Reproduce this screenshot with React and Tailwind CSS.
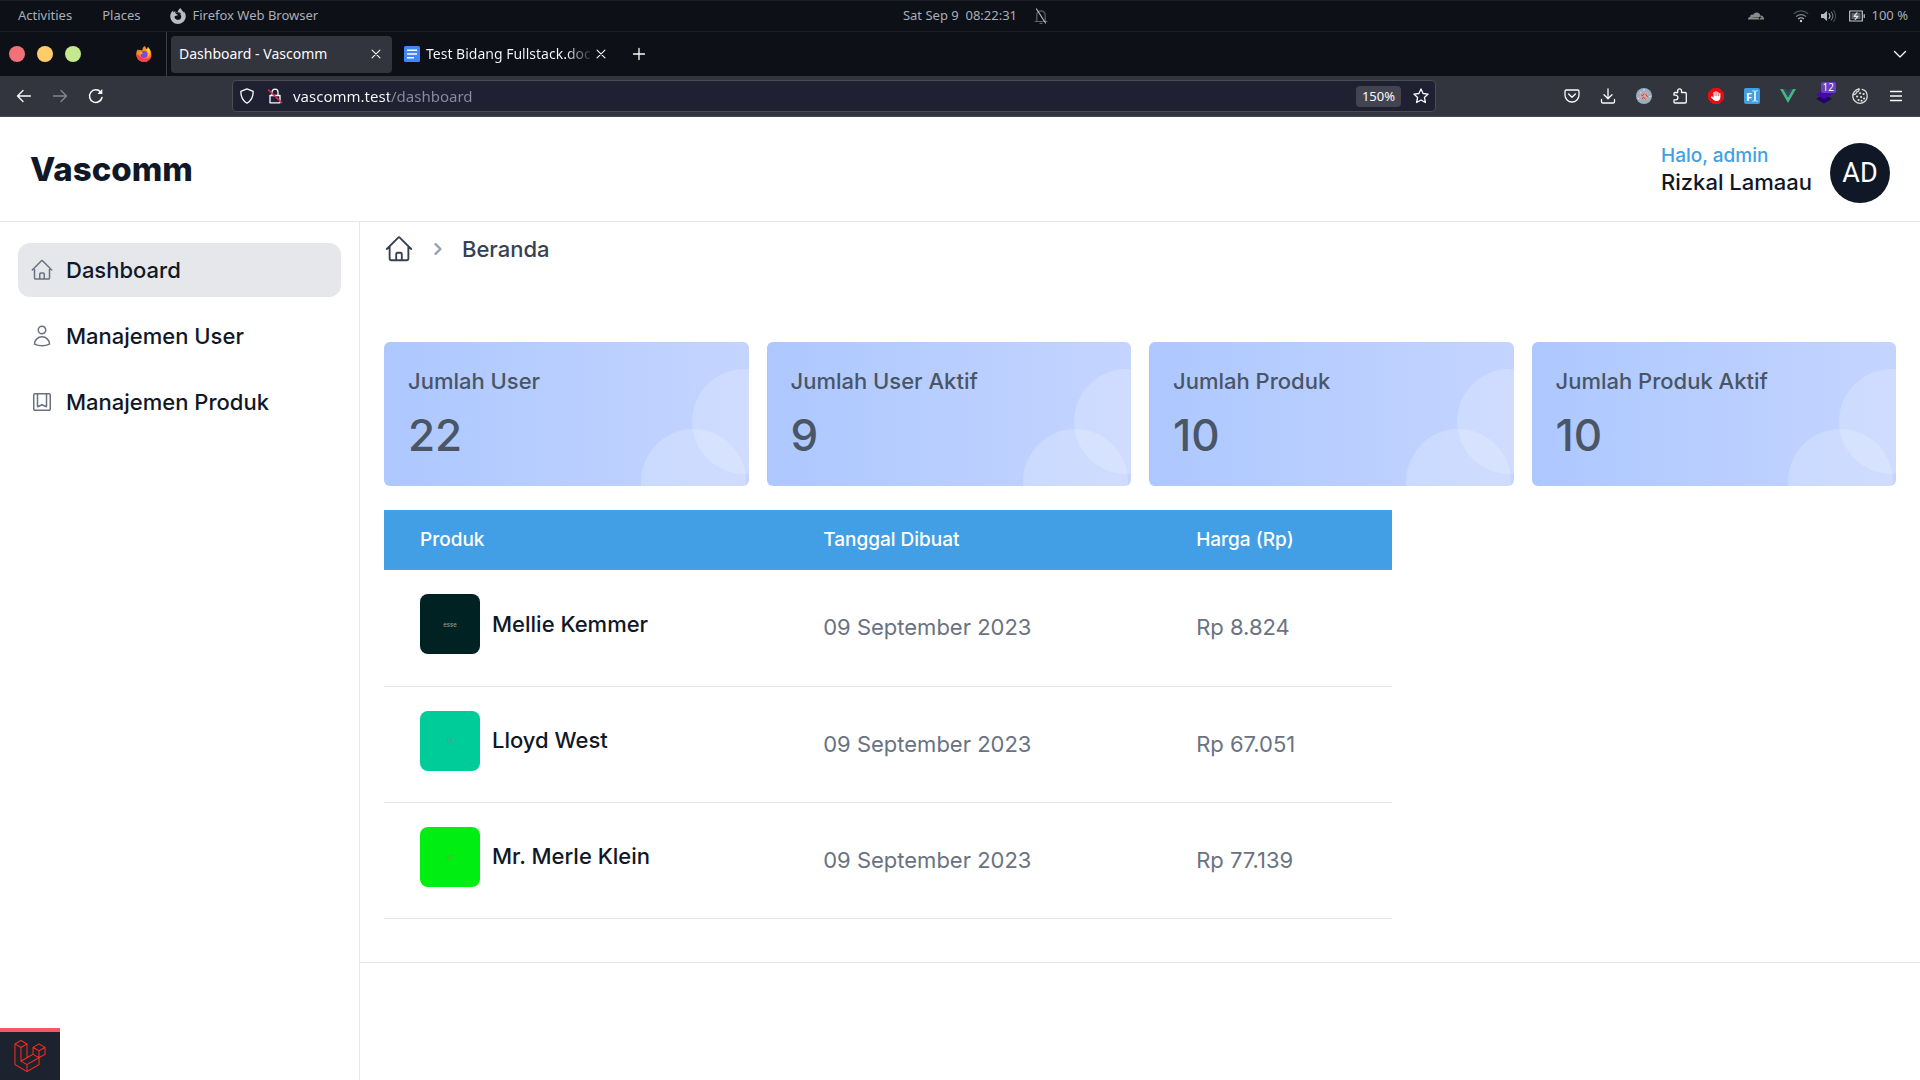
import React from "react";
import { SiCloudflare, SiFirefoxbrowser, SiLaravel } from "react-icons/si";
import { FaHand } from "react-icons/fa6";

const navItems = [
  { label: "Dashboard", icon: "home", active: true },
  { label: "Manajemen User", icon: "user", active: false },
  { label: "Manajemen Produk", icon: "book", active: false },
];

const stats = [
  { label: "Jumlah User", value: "22" },
  { label: "Jumlah User Aktif", value: "9" },
  { label: "Jumlah Produk", value: "10" },
  { label: "Jumlah Produk Aktif", value: "10" },
];

const products = [
  { name: "Mellie Kemmer", date: "09 September 2023", price: "Rp 8.824", thumb: "bg-[#002222]", word: "esse", wordColor: "text-[#8c9b9b]" },
  { name: "Lloyd West", date: "09 September 2023", price: "Rp 67.051", thumb: "bg-[#00cc99]", word: "ut", wordColor: "text-[#4aa58c]" },
  { name: "Mr. Merle Klein", date: "09 September 2023", price: "Rp 77.139", thumb: "bg-[#00ee11]", word: "ut", wordColor: "text-[#4ab552]" },
];

const iconPaths = {
  home: ["m2.25 12 8.954-8.955c.44-.439 1.152-.439 1.591 0L21.75 12M4.5 9.75v10.125c0 .621.504 1.125 1.125 1.125H9.75v-4.875c0-.621.504-1.125 1.125-1.125h2.25c.621 0 1.125.504 1.125 1.125V21h4.125c.621 0 1.125-.504 1.125-1.125V9.75M8.25 21h8.25"],
  user: ["M15.75 6a3.75 3.75 0 1 1-7.5 0 3.75 3.75 0 0 1 7.5 0Z", "M4.501 20.118a7.5 7.5 0 0 1 14.998 0A17.933 17.933 0 0 1 12 21.75c-2.676 0-5.216-.584-7.499-1.632Z"],
  book: ["M5 3.75h14A1.25 1.25 0 0 1 20.25 5v14A1.25 1.25 0 0 1 19 20.25H5A1.25 1.25 0 0 1 3.75 19V5A1.25 1.25 0 0 1 5 3.75Z", "M7.5 3.75v13l4.5-2 4.5 2v-13"],
};

function OutlineIcon({ name, className }) {
  return (
    <svg viewBox="0 0 24 24" fill="none" stroke="currentColor" strokeWidth="1.5" strokeLinecap="round" strokeLinejoin="round" className={className} aria-hidden="true">
      {iconPaths[name].map((d) => (
        <path key={d} d={d} />
      ))}
    </svg>
  );
}

function Glyph({ children, className = "size-4", width = 1.3 }) {
  return (
    <svg viewBox="0 0 16 16" fill="none" stroke="currentColor" strokeWidth={width} strokeLinecap="round" strokeLinejoin="round" className={className} aria-hidden="true">
      {children}
    </svg>
  );
}

function SystemBar() {
  return (
    <div className="grid h-8 grid-cols-[1fr_auto_1fr] items-center border-y border-[#191d26] text-[13px] text-[#a9aeb8]">
      <div className="flex items-center pl-[18px]">
        <button className="mr-[30px]">Activities</button>
        <button className="mr-[30px]">Places</button>
        <button className="flex items-center gap-1.5">
          <SiFirefoxbrowser className="size-4 text-[#b9bcc3]" />
          Firefox Web Browser
        </button>
      </div>
      <button className="whitespace-pre">Sat Sep 9  08:22:31</button>
      <div className="flex items-center justify-between pl-4 pr-3">
        <Glyph className="size-4 text-[#5c616b]" width={1.2}>
          <path d="M2 13.5h12M3.8 13V7a4.2 4.2 0 0 1 8.4 0v6M7 15.3h2" />
          <path d="M3.5 1 12.5 15" stroke="#b5b8bf" />
        </Glyph>
        <div className="flex items-center">
          <SiCloudflare className="mr-[29px] size-4 text-[#8b8b8b]" />
          <svg viewBox="0 0 16 14" className="mr-3 h-3.5 w-4" fill="none" stroke="#4c515c" strokeWidth="1.2" aria-hidden="true">
            <path d="M.8 4.8a10.5 10.5 0 0 1 14.4 0" />
            <path d="M3 7.6a7.2 7.2 0 0 1 10 0" stroke="#7b808a" />
            <path d="M5.2 10a4 4 0 0 1 5.6 0" stroke="#b8bcc4" />
            <circle cx="8" cy="12" r="1.2" fill="#c9ccd3" stroke="none" />
          </svg>
          <Glyph className="mr-3 size-4 text-[#b5b9c2]" width={1.1}>
            <path d="M0 6h2.5L6 3v10L2.5 10H0Z" fill="currentColor" stroke="none" />
            <path d="M8 5.5a4 4 0 0 1 0 5" />
            <path d="M10.3 4a6.500 6.500 0 0 1 0 8" stroke="#737883" />
            <path d="M12.6 2.500a9 9 0 0 1 0 11" stroke="#4c515c" />
          </Glyph>
          <Glyph className="mr-[7px] size-4" width={1.2}>
            <path d="M.7 3h12.600v10H.7ZM15.200 6.500v3" stroke="#c3c7cf" />
            <path d="M2.500 4.800h9v6.400h-9Z" fill="#5d626c" stroke="none" />
            <path d="M8 4.800 5 8.300h4L6.200 11.400" stroke="#e4e6ea" />
          </Glyph>
          <span>100 %</span>
        </div>
      </div>
    </div>
  );
}

function FirefoxLogo() {
  return (
    <svg viewBox="0 0 16 16" className="size-4" aria-hidden="true">
      <path d="M8.5 0c1 1.200 1.400 2 1.600 3 1-.4 1.600-.2 1.600-.2s-.2-1 .2-1.700c1 1 2.200 2.300 2.800 3.900 1.200 3 .8 6.200-1.200 8.400A7.500 7.500 0 0 1 8 16C4 16 .5 12.900.3 8.800.2 6.500.8 4.400 2.100 3c0 .6.2 1.200.5 1.600C4 3.500 5.500 4.400 6.400 4.500 6.200 2.600 7.400.9 8.500 0Z" fill="#ff8a16" />
      <path d="M.4 8A7.700 7.700 0 0 0 8 16c4.200 0 7.300-3.200 7.600-6.800-1.600 2.800-4 3.600-6.600 3.400C5 12.200 3 9 .4 8Z" fill="#ff3b55" />
      <circle cx="8" cy="8.600" r="3.500" fill="#7a4bdc" />
      <path d="M8.500 0c1.800 2 1.200 3.600 3 5.300 1.200 1.100 1.400 3.200.3 4.700 2-.5 2.600-3.500 2-5.700L11.900 1.100c-.4.7-.2 1.700-.2 1.700s-.6-.2-1.600.2C9.900 2 9.500 1.200 8.500 0Z" fill="#ffd83b" />
      <path d="M3.500 6.200c1.500-.5 3 .2 3.500 1.300-1.400 0-1.600 1-3 1Z" fill="#ffab28" />
    </svg>
  );
}

function TabStrip() {
  return (
    <div className="flex h-11 items-center text-sm text-[#fbfbfe]">
      <div className="flex gap-3 pl-[9px]">
        <button aria-label="Close window" className="size-4 rounded-full bg-[#f07178]" />
        <button aria-label="Minimize window" className="size-4 rounded-full bg-[#ffcb6b]" />
        <button aria-label="Maximize window" className="size-4 rounded-full bg-[#c3e88d]" />
      </div>
      <button aria-label="Firefox View" className="ml-[55px] mr-3.5">
        <FirefoxLogo />
      </button>
      <div className="flex h-full items-center border-l border-[#3c3f47] pl-1">
        <div className="flex h-[37px] w-[221px] items-center rounded bg-[#32353d] pl-2 pr-[9px]">
          <button className="flex-1 text-left">Dashboard - Vascomm</button>
          <button aria-label="Close tab">
            <Glyph className="size-3.5" width={1.2}>
              <path d="m3.500 3.500 9 9M12.500 3.500l-9 9" />
            </Glyph>
          </button>
        </div>
        <div className="ml-3 flex h-[37px] w-[190px] items-center">
          <svg viewBox="0 0 16 16" className="mr-1.5 size-4 shrink-0" aria-hidden="true">
            <rect width="16" height="16" rx="1.500" fill="#4285f4" />
            <path d="M3 4.200h10M3 8h10M3 11.800h7" stroke="#fff" strokeWidth="1.600" />
          </svg>
          <button className="bg-linear-to-r from-[#fbfbfe] from-85% to-[#2a2d34] bg-clip-text text-left whitespace-nowrap text-transparent">
            Test Bidang Fullstack.doc
          </button>
        </div>
        <button aria-label="Close tab">
          <Glyph className="size-3.5" width={1.2}>
            <path d="m3.500 3.500 9 9M12.500 3.500l-9 9" />
          </Glyph>
        </button>
        <button aria-label="New tab" className="ml-[23px]">
          <Glyph className="size-4">
            <path d="M8 2.500v11M2.500 8h11" />
          </Glyph>
        </button>
      </div>
      <button aria-label="List all tabs" className="mr-3 ml-auto">
        <Glyph>
          <path d="m2.500 5.500 5.500 5.500 5.500-5.500" />
        </Glyph>
      </button>
    </div>
  );
}

function ToolButton({ label, children }) {
  return (
    <button aria-label={label} className="relative grid h-8 w-9 place-items-center">
      {children}
    </button>
  );
}

function Toolbar() {
  return (
    <div className="box-content flex h-10 items-center justify-between border-b border-[#4a4c52] bg-[#32353d] text-[#fbfbfe]">
      <div className="flex w-[232px] shrink-0 pl-1.5">
        <ToolButton label="Back">
          <Glyph><path d="M14.500 8h-13M7 2.500 1.500 8 7 13.500" /></Glyph>
        </ToolButton>
        <ToolButton label="Forward">
          <Glyph className="size-4 text-[#85878d]"><path d="M1.500 8h13M9 2.500 14.500 8 9 13.500" /></Glyph>
        </ToolButton>
        <ToolButton label="Reload">
          <Glyph width={1.5}>
            <path d="M14 9.500A6.300 6.300 0 1 1 12.600 4" />
            <path d="M14.300 1v5H9.500Z" fill="currentColor" stroke="none" />
          </Glyph>
        </ToolButton>
      </div>
      <div className="flex h-8 flex-1 items-center rounded border border-[#4b4c4f] bg-[#1f2133] px-[6px]">
        <Glyph className="mr-3 size-4"><path d="M8 .9 14.200 3.300c.1 5.500-2 9.500-6.200 11.900C3.800 12.800 1.700 8.800 1.800 3.300Z" /></Glyph>
        <Glyph className="size-4">
          <path d="M3 7.500h10v7.300H3ZM5 7.500V4.200a3 3 0 0 1 6 0v3.300" />
          <path d="M1.500 2 14.500 14.500" stroke="#e22850" strokeWidth="1.600" />
        </Glyph>
        <input
          aria-label="Address"
          defaultValue="vascomm.test/dashboard"
          className="ml-2.5 min-w-0 flex-1 bg-[linear-gradient(90deg,#fbfbfe_96px,#8b8c99_96px)] bg-clip-text text-[15px] text-transparent outline-none"
        />
        <button className="mr-3 h-[21px] rounded bg-[#42444f] px-1.5 text-[13px] leading-[21px]">150%</button>
        <button aria-label="Bookmark this page">
          <Glyph><path d="m8 .9 2.100 4.600 5 .6-3.700 3.400 1 5-4.400-2.500-4.400 2.500 1-5L.9 6.100l5-.6Z" /></Glyph>
        </button>
      </div>
      <div className="flex w-[484px] shrink-0 justify-end pr-1.5">
        <ToolButton label="Save to Pocket">
          <Glyph><path d="M2.300 2h11.400c.8 0 1.300.5 1.300 1.300V7a7 7 0 0 1-14 0V3.300C1 2.500 1.500 2 2.300 2ZM4.600 6 8 9.200 11.400 6" /></Glyph>
        </ToolButton>
        <ToolButton label="Downloads">
          <Glyph><path d="M8 .8v9.700M4 6.800l4 4 4-4M1.500 11.500v2.200c0 .8.5 1.300 1.300 1.300h10.400c.8 0 1.300-.5 1.300-1.300v-2.200" /></Glyph>
        </ToolButton>
        <ToolButton label="Profile">
          <svg viewBox="0 0 16 16" className="size-4" aria-hidden="true">
            <circle cx="8" cy="8" r="8" fill="#8fb2c4" />
            <path d="M3 4.500 6 3l2 2 3-2 2 3-1 3 1 3-4 1-2-2-3 2-1-4 1-2Z" fill="#d5a3a4" />
            <path d="m5 7 2 .5 1-2M10 6l.5 2 1.500.5M6 11l1.500-2 2 2.500" stroke="#a75458" fill="none" />
            <path d="M1.500 9.500 3 11M8 1v2M13 9l2-1M4 4l1 1" stroke="#e8dfe3" />
          </svg>
        </ToolButton>
        <ToolButton label="Extensions">
          <Glyph><path d="M2 7.200V5.600c0-.7.400-1.100 1.100-1.100h2.600V2.800a1.900 1.900 0 0 1 3.800 0v1.700h3.700c.7 0 1.100.4 1.100 1.100v8.300c0 .7-.4 1.100-1.100 1.100H3.100c-.7 0-1.100-.4-1.100-1.100v-2h1.600a1.900 1.900 0 0 0 0-4.700Z" /></Glyph>
        </ToolButton>
        <ToolButton label="AdBlock">
          <span className="grid size-4 place-items-center bg-[#e80c13] [clip-path:polygon(30%_0,70%_0,100%_30%,100%_70%,70%_100%,30%_100%,0_70%,0_30%)]">
            <FaHand className="size-2.5 text-white" />
          </span>
        </ToolButton>
        <ToolButton label="Fonts Ninja">
          <span className="flex size-4 items-center justify-center rounded-xs bg-[#42a0e2] text-[11px] leading-none font-bold text-white">
            F
            <svg viewBox="0 0 6 12" className="h-3 w-1.5" fill="none" stroke="currentColor" aria-hidden="true">
              <path d="M.5.8c1.500 0 2.500.4 2.500 1.200v8c0 .8-1 1.200-2.500 1.200M5.500.8C4 .8 3 1.200 3 2v8c0 .8 1 1.200 2.500 1.200" />
            </svg>
          </span>
        </ToolButton>
        <ToolButton label="Vue devtools">
          <svg viewBox="0 0 16 14" className="h-3.5 w-4" aria-hidden="true">
            <path d="M0 0h3.200L8 8.300 12.800 0H16L8 14Z" fill="#41b883" />
            <path d="M3.200 0h3L8 3.100 9.800 0h3L8 8.300Z" fill="#35495e" />
          </svg>
        </ToolButton>
        <ToolButton label="Wappalyzer">
          <svg viewBox="0 0 16 16" className="size-4" aria-hidden="true">
            <path d="M0 10.800 8 6.500l8 4.300-8 4.700Z" fill="#26006d" />
            <path d="M0 6.500 8 2l8 4.500L8 11Z" fill="#4608ad" />
          </svg>
          <span className="absolute top-0.5 right-1.5 rounded-xs bg-[#6b3fc4] px-0.5 text-[10px] leading-[11px]">12</span>
        </ToolButton>
        <ToolButton label="Cookie manager">
          <Glyph className="size-4 text-[#dcdcdc]">
            <path d="M7 1a7.200 7.200 0 1 0 8.200 7c0-3.400-2-5.900-5-6.700" />
            <path d="M7 1c.2 1.800-.8 3-2.500 3-.2 1.800-1.500 2.800-3.300 2.500" />
            <path d="M8 5.200h.2M11.500 6h.2M5 8.500h.2M9 9h.2M12 10.500h.2M6.500 12h.2M9.500 12.700h.2" strokeWidth="2" />
          </Glyph>
        </ToolButton>
        <ToolButton label="Application menu">
          <Glyph><path d="M2.500 3.500h11M2.500 8h11M2.500 12.500h11" /></Glyph>
        </ToolButton>
      </div>
    </div>
  );
}

function PageHeader() {
  return (
    <header className="flex h-[105px] items-center justify-between border-b border-gray-200 px-[30px]">
      <a href="#home" className="text-[33px] leading-9 font-extrabold text-gray-900">Vascomm</a>
      <div className="mt-2 flex items-center gap-[18px]">
        <div className="pb-2 font-medium">
          <p className="text-[19px] leading-[26px] text-[#429fe5]">Halo, admin</p>
          <p className="text-[22px] leading-[27px] text-gray-900">Rizkal Lamaau</p>
        </div>
        <button className="size-[60px] rounded-full bg-gray-900 font-['Roboto',sans-serif] text-[27px] text-white">AD</button>
      </div>
    </header>
  );
}

function Sidebar() {
  return (
    <nav className="flex w-[360px] shrink-0 flex-col gap-3 border-r border-gray-200 px-[18px] pt-[21px]">
      {navItems.map((item) => (
        <a
          key={item.label}
          href="#menu"
          aria-current={item.active ? "page" : undefined}
          className={
            item.active
              ? "flex h-[54px] items-center gap-3 rounded-xl bg-gray-200 px-3 text-[22px] font-medium text-gray-900"
              : "flex h-[54px] items-center gap-3 rounded-xl px-3 text-[22px] font-medium text-gray-900"
          }
        >
          <OutlineIcon name={item.icon} className="size-6 text-gray-500" />
          {item.label}
        </a>
      ))}
    </nav>
  );
}

function StatCard({ label, value }) {
  return (
    <div className="relative h-36 overflow-hidden rounded-md bg-linear-to-r from-[#adc8ff] to-[#c4d4ff] px-6 pt-6 font-medium text-gray-600">
      <span className="absolute top-[27px] -right-12 size-[105px] rounded-full bg-white/20" />
      <span className="absolute top-[87px] right-[3px] size-[105px] rounded-full bg-white/20" />
      <p className="text-[22px] leading-[30px]">{label}</p>
      <p className="mt-3 text-[44px] leading-[54px]">{value}</p>
    </div>
  );
}

function ProductTable() {
  return (
    <table className="w-2/3 table-fixed border-collapse text-left text-[22px]">
      <thead>
        <tr className="h-[60px] bg-[#429fe5] text-[19px] text-white">
          <th className="w-[40%] px-9 font-medium">Produk</th>
          <th className="w-[37%] px-9 font-medium">Tanggal Dibuat</th>
          <th className="px-9 font-medium">Harga (Rp)</th>
        </tr>
      </thead>
      <tbody>
        {products.map((product) => (
          <tr key={product.name} className="h-[116px] border-b border-gray-200">
            <td className="px-9 pt-6 align-top">
              <div className="flex items-center gap-3 font-medium text-gray-900">
                <span className={`grid size-[60px] place-items-center rounded-lg text-[6px] ${product.thumb} ${product.wordColor}`}>
                  {product.word}
                </span>
                {product.name}
              </div>
            </td>
            <td className="px-9 text-gray-500">{product.date}</td>
            <td className="px-9 text-gray-500">{product.price}</td>
          </tr>
        ))}
      </tbody>
    </table>
  );
}

export default function App() {
  return (
    <div className="flex min-h-screen flex-col bg-white">
      <div className="bg-[#0d1017] font-['Noto_Sans',sans-serif]">
        <SystemBar />
        <TabStrip />
        <Toolbar />
      </div>
      <div className="flex flex-1 flex-col font-['Inter',sans-serif]">
        <PageHeader />
        <div className="flex flex-1">
          <Sidebar />
          <main className="flex-1">
            <section className="border-b border-gray-200 px-6 pb-[43px]">
              <div className="flex h-[54px] items-center text-[22px] text-gray-700">
                <a href="#beranda" aria-label="Home"><OutlineIcon name="home" className="size-[30px]" /></a>
                <svg viewBox="0 0 6 10" className="mx-5 h-3 w-2 text-gray-400" fill="none" stroke="currentColor" strokeWidth="2" strokeLinecap="round" strokeLinejoin="round" aria-hidden="true">
                  <path d="m1 9 4-4-4-4" />
                </svg>
                <a href="#beranda" className="font-medium">Beranda</a>
              </div>
              <div className="mt-[66px] mb-6 grid grid-cols-4 gap-[18px]">
                {stats.map((stat) => (
                  <StatCard key={stat.label} label={stat.label} value={stat.value} />
                ))}
              </div>
              <ProductTable />
            </section>
          </main>
        </div>
      </div>
      <button aria-label="Debug bar" className="fixed bottom-0 left-0 grid h-[52px] w-[60px] place-items-center border-t-4 border-[#fb5661] bg-[#1c222e]">
        <SiLaravel className="size-8 text-[#ff2d20]" />
      </button>
    </div>
  );
}
